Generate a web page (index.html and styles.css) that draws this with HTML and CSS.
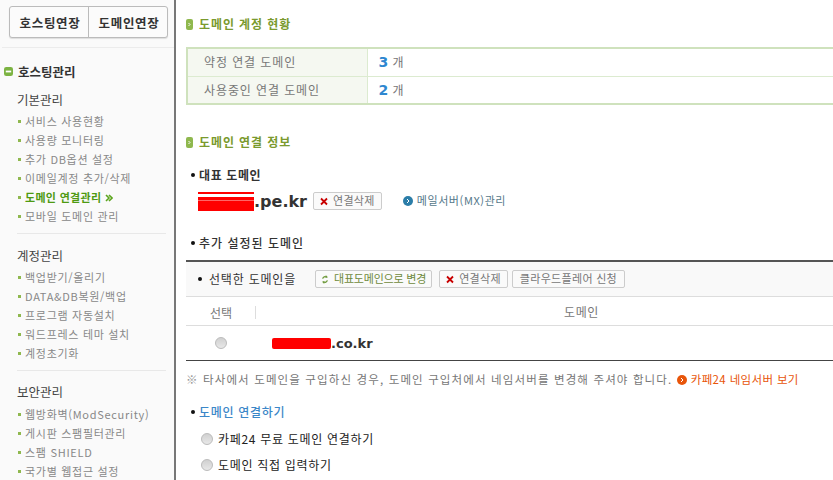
FILE: index.html
```html
<!DOCTYPE html>
<html lang="ko">
<head>
<meta charset="utf-8">
<title>도메인 연결관리</title>
<link rel="stylesheet" href="styles.css">
</head>
<body>
<div class="page">
  <aside class="side">
    <div class="ext">
      <a class="ext-btn">호스팅연장</a>
      <a class="ext-btn">도메인연장</a>
    </div>
    <h2 class="side-title"><svg class="minus" viewBox="0 0 10 10"><rect width="10" height="10" rx="2.5" fill="#7cb342"/><rect x="2" y="4" width="6" height="2" fill="#fff"/></svg>호스팅관리</h2>
    <section class="group first-group">
      <h3>기본관리</h3>
      <ul>
        <li>서비스 사용현황</li>
        <li>사용량 모니터링</li>
        <li>추가 DB옵션 설정</li>
        <li>이메일계정 추가/삭제</li>
        <li class="on">도메인 연결관리 <svg class="chev" viewBox="0 0 8 8"><path d="M1 1l3 3-3 3M4 1l3 3-3 3" fill="none" stroke="#5ca51e" stroke-width="1.6"/></svg></li>
        <li>모바일 도메인 관리</li>
      </ul>
    </section>
    <section class="group">
      <h3>계정관리</h3>
      <ul>
        <li>백업받기/올리기</li>
        <li>DATA&amp;DB복원/백업</li>
        <li>프로그램 자동설치</li>
        <li>워드프레스 테마 설치</li>
        <li>계정초기화</li>
      </ul>
    </section>
    <section class="group last">
      <h3>보안관리</h3>
      <ul>
        <li>웹방화벽(ModSecurity)</li>
        <li>게시판 스팸필터관리</li>
        <li>스팸 SHIELD</li>
        <li>국가별 웹접근 설정</li>
      </ul>
    </section>
  </aside>
  <main class="main">
    <h2 class="sec first"><svg class="pill" viewBox="0 0 7 11"><rect width="7" height="11" rx="2" fill="#8fb84e"/><path d="M2.5 4l1.5 1.5L2.5 7" fill="none" stroke="#fff"/></svg>도메인 계정 현황</h2>
    <table class="stat">
      <tr><th>약정 연결 도메인</th><td><b>3</b> 개</td></tr>
      <tr><th>사용중인 연결 도메인</th><td><b>2</b> 개</td></tr>
    </table>
    <h2 class="sec second"><svg class="pill" viewBox="0 0 7 11"><rect width="7" height="11" rx="2" fill="#8fb84e"/><path d="M2.5 4l1.5 1.5L2.5 7" fill="none" stroke="#fff"/></svg>도메인 연결 정보</h2>
    <h3 class="sub rep">대표 도메인</h3>
    <div class="domain-row">
      <span class="domain"><span class="mask"></span>.pe.kr</span>
      <a class="btn"><svg class="x" viewBox="0 0 8 8"><path d="M1 1l6 6M7 1L1 7" stroke="#c80000" stroke-width="1.8"/></svg>연결삭제</a>
      <a class="mx"><svg class="dot" viewBox="0 0 10 10"><circle cx="5" cy="5" r="5" fill="#2b7da8"/><path d="M4 3l2 2-2 2" fill="none" stroke="#fff"/></svg>메일서버(MX)관리</a>
    </div>
    <h3 class="sub extra">추가 설정된 도메인</h3>
    <div class="toolbar">
      <span class="lead">선택한 도메인을</span>
      <a class="btn green"><svg class="x" viewBox="0 0 10 12"><path d="M2 5a3 3 0 0 1 5-2M8 7a3 3 0 0 1-5 2" fill="none" stroke="#6f9a3c" stroke-width="1.6"/><path d="M6 0l3 3-3 1zM4 12L1 9l3-1z" fill="#6f9a3c"/></svg>대표도메인으로 변경</a>
      <a class="btn"><svg class="x" viewBox="0 0 8 8"><path d="M1 1l6 6M7 1L1 7" stroke="#c80000" stroke-width="1.8"/></svg>연결삭제</a>
      <a class="btn wide">클라우드플레어 신청</a>
    </div>
    <div class="thead">
      <span class="col-sel">선택</span>
      <span class="col-dom">도메인</span>
    </div>
    <div class="trow">
      <span class="col-radio"><span class="radio"></span></span>
      <span class="name"><span class="mask thin"></span>.co.kr</span>
    </div>
    <p class="note"><span class="ref">※</span> 타사에서 도메인을 구입하신 경우, 도메인 구입처에서 네임서버를 변경해 주셔야 합니다. <svg class="dot" viewBox="0 0 10 10"><circle cx="5" cy="5" r="5" fill="#e8550a"/><path d="M4 3l2 2-2 2" fill="none" stroke="#fff"/></svg><a class="orange">카페24 네임서버 보기</a></p>
    <h3 class="sub blue">도메인 연결하기</h3>
    <label class="opt"><span class="radio"></span>카페24 무료 도메인 연결하기</label>
    <label class="opt"><span class="radio"></span>도메인 직접 입력하기</label>
  </main>
</div>
</body>
</html>
```
FILE: styles.css
```css
* { box-sizing: border-box; }
html, body { margin: 0; height: 100%; overflow: hidden; background: #fff; }
body { font: 12px/1.2 "Noto Sans CJK KR", "Liberation Sans", sans-serif; color: #666; }
h2, h3, ul, p { margin: 0; padding: 0; font-size: inherit; }
ul { list-style: none; }
.page { display: flex; width: 833px; height: 480px; overflow: hidden; }

.side { flex: none; width: 176px; height: 480px; background: #fafafa; border-right: 2px solid #777; overflow: hidden; padding-top: 6px; }
.ext { display: flex; width: 159px; height: 32px; margin-left: 9px; background: #fbfbfb; border: 1px solid #bbb; border-radius: 3px; box-shadow: 0 1px 1px #ddd; }
.ext-btn { flex: 1; display: flex; align-items: center; justify-content: center; padding-left: 2px; font-weight: 700; font-size: 12.5px; letter-spacing: .7px; color: #333; }
.ext-btn + .ext-btn { border-left: 1px solid #bbb; }
.side-title { display: flex; align-items: center; height: 48px; margin: 9px 0 0 2px; padding-left: 4px; border-top: 1px solid #ececec; font-size: 12.5px; font-weight: 700; color: #333; }
.minus { width: 9px; height: 9px; margin-right: 5px; margin-left: -2px; }
.group { margin: 0 8px 0 17px; }
.first-group { margin-top: -5px; }
.group h3 { height: 22px; line-height: 20px; font-size: 12.5px; font-weight: 400; color: #444; }
.group ul { padding-bottom: 7px; border-bottom: 1px solid #e8e8e8; margin-bottom: 12px; }
.group.last { margin-top: -1px; }
.group.last ul { border: 0; }
.group li { position: relative; height: 19px; line-height: 19px; padding-left: 8px; font-size: 11px; color: #888; white-space: nowrap; letter-spacing: .7px; }
.group li::before { content: ""; position: absolute; left: 1px; top: 8px; width: 3px; height: 3px; background: #8fb84e; }
.group.last h3 { height: 23px; }
.group li.on { font-weight: 700; color: #4f9a12; letter-spacing: .3px; }
.chev { width: 8px; height: 8px; }

.main { flex: 1; min-width: 0; padding-left: 10px; }
.sec { display: flex; align-items: center; height: 16px; font-size: 12px; font-weight: 700; color: #7a9a2e; letter-spacing: .9px; }
.sec.first { margin-top: 16px; }
.sec.second { margin-top: 29px; }
.pill { width: 7px; height: 11px; margin-right: 6px; }
.stat { width: 100%; margin-top: 15px; border-collapse: collapse; border: 2px solid #cfe2bd; border-right: 0; }
.stat tr + tr th, .stat tr + tr td { border-top: 1px solid #dcebd0; }
.stat th { width: 180px; height: 28px; padding: 0 0 0 16px; background: #f5f8f1; border-right: 1px solid #dcebd0; font-weight: 400; text-align: left; color: #777; letter-spacing: .9px; }
.stat td { padding-left: 11px; color: #777; }
.stat b { font: 700 14px "DejaVu Sans", sans-serif; color: #2e87d0; margin-right: 1px; }

.sub { position: relative; padding-left: 13px; font-weight: 700; font-size: 12px; letter-spacing: .6px; color: #333; height: 16px; line-height: 16px; }
.sub::before { content: ""; position: absolute; left: 5px; top: 6px; width: 4px; height: 4px; border-radius: 50%; background: #111; }
.rep { margin-top: 17px; }
.extra { margin-top: 24px; font-weight: 500; letter-spacing: 1px; }
.domain-row { display: flex; align-items: center; height: 20px; margin-top: 8px; padding-left: 12px; }
.domain { display: flex; align-items: center; font: 700 16px "DejaVu Sans", sans-serif; color: #333; }
.mask { display: block; width: 56px; height: 19px; background: linear-gradient(#f00 2px, #fff 2px, #fff 5px, #f00 5px, #f00 8px, #f66 8px, #f66 9px, #f00 9px); }
.btn { display: inline-flex; align-items: center; height: 18px; padding: 0 6px; background: #fafafa; border: 1px solid #ccc; border-radius: 2px; font-size: 11px; letter-spacing: .3px; color: #777; white-space: nowrap; }
.domain-row .btn { margin-left: 6px; }
.btn.green { padding: 0 5px; margin-right: 3px; letter-spacing: -.2px; color: #6f8a3c; }
.btn.wide { padding: 0 7px; }
.x { width: 8px; height: 9px; margin-right: 5px; }
.mx { display: inline-flex; align-items: center; margin-left: 21px; font-size: 11px; letter-spacing: .6px; color: #55788a; }
.dot { width: 10px; height: 10px; margin-right: 4px; vertical-align: -1px; }

.toolbar { display: flex; align-items: center; gap: 4px; height: 37px; margin-top: 9px; padding: 0 0 0 23px; background: #f9f9f9; border-top: 2px solid #555; border-bottom: 1px solid #ddd; position: relative; }
.lead { width: 102px; flex: none; font-size: 12px; letter-spacing: .8px; color: #333; }
.toolbar::before { content: ""; position: absolute; left: 12px; top: 15px; width: 4px; height: 4px; border-radius: 50%; background: #111; }
.thead { display: flex; align-items: center; height: 29px; padding-top: 2px; border-bottom: 1px solid #ddd; font-size: 12px; color: #777; }
.col-sel { width: 70px; padding-left: 24px; border-right: 1px solid #ddd; line-height: 13px; }
.col-dom { flex: 1; text-align: center; padding-left: 74px; letter-spacing: .6px; }
.trow { display: flex; align-items: center; height: 35px; border-bottom: 1px solid #444; }
.col-radio { width: 86px; padding-left: 29px; display: flex; }
.name { display: flex; align-items: center; font: 700 13px "DejaVu Sans", sans-serif; color: #333; }
.mask.thin { width: 59px; height: 11px; background: #f00; border-radius: 2px; }
.radio { display: inline-block; flex: none; width: 12px; height: 12px; border-radius: 50%; background: linear-gradient(#d0d0d0, #e8e8e8); border: 1px solid #bbb; }
.note { margin-top: 10px; height: 16px; line-height: 16px; font-size: 11.5px; color: #777; white-space: nowrap; letter-spacing: 1.13px; }
.ref { color: #999; }
.orange { color: #e8550a; letter-spacing: .35px; }
.blue { margin-top: 17px; color: #3b87c8; font-weight: 500; letter-spacing: .7px; }
.opt { display: flex; align-items: center; gap: 5px; height: 18px; margin: 8px 0 0 15px; font-size: 12px; letter-spacing: .7px; color: #222; }
.blue + .opt { margin-top: 10px; }
```
